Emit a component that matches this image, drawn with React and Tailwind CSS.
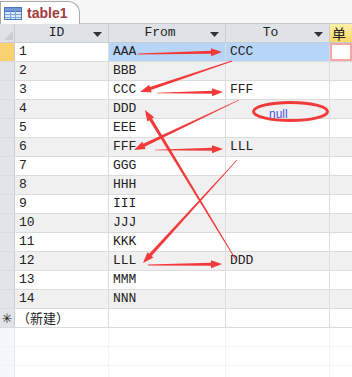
import React from "react";

const rows = [
  ["1", "AAA", "CCC"],
  ["2", "BBB", ""],
  ["3", "CCC", "FFF"],
  ["4", "DDD", ""],
  ["5", "EEE", ""],
  ["6", "FFF", "LLL"],
  ["7", "GGG", ""],
  ["8", "HHH", ""],
  ["9", "III", ""],
  ["10", "JJJ", ""],
  ["11", "KKK", ""],
  ["12", "LLL", "DDD"],
  ["13", "MMM", ""],
  ["14", "NNN", ""],
];

const mono = { fontFamily: '"Liberation Mono", "DejaVu Sans Mono", monospace' };

function Arrow({ x1, y1, x2, y2, w1 = 0.6, w2 = 3, L = 11, W = 8 }) {
  const dx = x2 - x1;
  const dy = y2 - y1;
  const len = Math.hypot(dx, dy);
  const ux = dx / len;
  const uy = dy / len;
  const nx = -uy;
  const ny = ux;
  const bx = x2 - ux * L;
  const by = y2 - uy * L;
  const p = [
    [x1 + (nx * w1) / 2, y1 + (ny * w1) / 2],
    [bx + (nx * w2) / 2, by + (ny * w2) / 2],
    [bx + (nx * W) / 2, by + (ny * W) / 2],
    [x2, y2],
    [bx - (nx * W) / 2, by - (ny * W) / 2],
    [bx - (nx * w2) / 2, by - (ny * w2) / 2],
    [x1 - (nx * w1) / 2, y1 - (ny * w1) / 2],
  ];
  return <polygon points={p.map((q) => q.join(",")).join(" ")} fill="#f23a3a" />;
}

function Tri() {
  return (
    <svg width="9" height="5" viewBox="0 0 9 5" className="absolute right-[6px] top-[8px]">
      <polygon points="0,0 9,0 4.5,5" fill="#333" />
    </svg>
  );
}

export default function App() {
  return (
    <div className="relative w-[352px] h-[377px] overflow-hidden bg-white">
      {/* tab bar */}
      <div className="h-[24px] bg-[#f7f7f7] flex items-end border-b border-[#c8c8c8]">
        <div className="relative h-[23px] w-[80px] bg-white border-t border-l border-r border-[#a9a9a9] rounded-tr-[12px] flex items-center gap-[5px] pl-[3px] -mb-px">
          <svg width="18" height="13" viewBox="0 0 18 13">
            <rect x="0.5" y="0.5" width="17" height="12" fill="#dbe8f8" stroke="#4a78c0" />
            <rect x="1" y="1" width="16" height="3" fill="#6f98d6" />
            <line x1="1" y1="4.5" x2="17" y2="4.5" stroke="#4a78c0" />
            <line x1="1" y1="7.5" x2="17" y2="7.5" stroke="#7fa2d8" />
            <line x1="1" y1="10.5" x2="17" y2="10.5" stroke="#7fa2d8" />
            <line x1="6.5" y1="4" x2="6.5" y2="12" stroke="#7fa2d8" />
            <line x1="11.5" y1="4" x2="11.5" y2="12" stroke="#7fa2d8" />
          </svg>
          <span
            className="text-[14px] font-bold text-[#a23a3c] leading-none"
            style={{ fontFamily: '"Liberation Sans", Arial, sans-serif' }}
          >
            table1
          </span>
        </div>
      </div>

      {/* header */}
      <div className="flex h-[19px] bg-[#dfe2e7] border-b border-[#c9cdd3] text-[13px] text-[#222]" style={mono}>
        <div className="relative w-[15px] shrink-0 border-r border-[#c9cdd3]">
          <svg width="9" height="9" className="absolute right-[1px] bottom-[2px]">
            <polygon points="9,0 9,9 0,9" fill="#c9ccd1" />
          </svg>
        </div>
        <div className="relative w-[94px] shrink-0 border-r border-[#c9cdd3] flex items-center justify-center pr-[10px]">
          ID
          <Tri />
        </div>
        <div className="relative w-[117px] shrink-0 border-r border-[#c9cdd3] flex items-center justify-center pr-[14px]">
          From
          <Tri />
        </div>
        <div className="relative w-[104px] shrink-0 border-r border-[#c9cdd3] flex items-center justify-center pr-[14px]">
          To
          <Tri />
        </div>
        <div
          className="flex-1 bg-gradient-to-b from-[#fff0a8] to-[#f9d865] flex items-center pl-[2px] text-[14px]"
          style={{ fontFamily: '"Noto Sans CJK SC", sans-serif' }}
        >
          单
        </div>
      </div>

      {/* rows */}
      {rows.map((r, i) => {
        const sel = i === 0;
        const bg = i % 2 === 1 ? "bg-[#f0f0f0]" : "bg-white";
        return (
          <div key={i} className={`flex h-[19px] border-b border-[#dcdcdc] text-[13px] text-[#222] ${bg}`} style={mono}>
            <div className={`w-[15px] shrink-0 border-r border-[#c9cdd3] ${sel ? "bg-[#f8d26e]" : "bg-[#e1e4e9]"}`} />
            <div className={`w-[94px] shrink-0 border-r border-[#dcdcdc] flex items-center pl-[4px] ${sel ? "bg-white" : ""}`}>
              {r[0]}
            </div>
            <div className={`w-[117px] shrink-0 border-r border-[#dcdcdc] flex items-center pl-[4px] ${sel ? "bg-[#b7d6f7]" : ""}`}>
              {r[1]}
            </div>
            <div className={`w-[104px] shrink-0 border-r border-[#dcdcdc] flex items-center pl-[4px] ${sel ? "bg-[#b7d6f7]" : ""}`}>
              {r[2]}
            </div>
            <div className={`flex-1 ${sel ? "bg-white border-2 border-[#f4a5a5]" : ""}`} />
          </div>
        );
      })}

      {/* new row */}
      <div className="flex h-[19px] border-b border-[#dcdcdc] bg-white text-[13px] text-[#222]">
        <div className="w-[15px] shrink-0 border-r border-[#c9cdd3] bg-[#e1e4e9] flex items-center justify-center text-[13px] font-bold leading-none" style={{ fontFamily: '"DejaVu Sans", sans-serif' }}>
          ✳
        </div>
        <div
          className="w-[94px] shrink-0 border-r border-[#dcdcdc] flex items-center pl-[2px]"
          style={{ fontFamily: '"Noto Sans CJK SC", sans-serif' }}
        >
          （新建）
        </div>
        <div className="w-[117px] shrink-0 border-r border-[#dcdcdc]" />
        <div className="w-[104px] shrink-0 border-r border-[#dcdcdc]" />
        <div className="flex-1" />
      </div>

      {/* empty area */}
      {[0, 1, 2].map((k) => (
        <div key={k} className="flex h-[19px] border-b border-[#f2f2f2] bg-white">
          <div className="w-[15px] shrink-0 border-r border-[#e6e8ee] bg-[#f5f7fc]" />
          <div className="w-[94px] shrink-0 border-r border-[#f2f2f2]" />
          <div className="w-[117px] shrink-0 border-r border-[#f2f2f2]" />
          <div className="w-[104px] shrink-0 border-r border-[#f2f2f2]" />
          <div className="flex-1" />
        </div>
      ))}

      {/* annotations */}
      <svg className="absolute left-0 top-0 pointer-events-none" width="352" height="377">
        <Arrow x1={138} y1={54} x2={222} y2={52} w1={0.8} w2={3} />
        <Arrow x1={232} y1={61} x2={140} y2={92} w1={0.8} w2={3.2} />
        <Arrow x1={157} y1={93} x2={223} y2={92} w1={0.5} w2={3} />
        <Arrow x1={239} y1={100} x2={134} y2={150} w1={0.6} w2={3.2} />
        <Arrow x1={155} y1={150} x2={223} y2={149} w1={0.5} w2={3} />
        <Arrow x1={237} y1={160} x2={143} y2={263} w1={0.6} w2={3.2} />
        <Arrow x1={148} y1={265} x2={222} y2={264} w1={1} w2={3} />
        <Arrow x1={236} y1={260} x2={145} y2={110} w1={0.8} w2={3.2} />
        <ellipse cx="290.5" cy="111.5" rx="37" ry="9" fill="none" stroke="#f23a3a" strokeWidth="3" />
        <text
          x="269"
          y="118"
          fontSize="12"
          fill="#4a52e8"
          style={{ fontFamily: '"Liberation Sans", Arial, sans-serif' }}
        >
          null
        </text>
      </svg>
    </div>
  );
}
